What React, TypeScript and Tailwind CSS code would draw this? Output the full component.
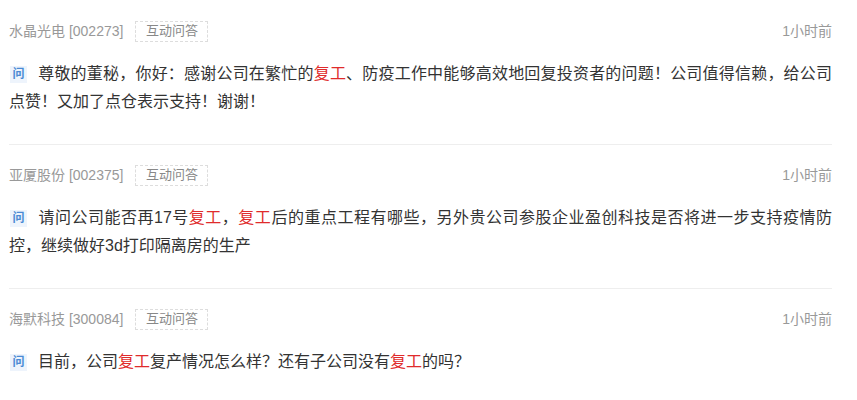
const items = [
  {
    name: "水晶光电",
    code: "002273",
    time: "1小时前",
    parts: [
      "尊敬的董秘，你好：感谢公司在繁忙的",
      { hl: "复工" },
      "、防疫工作中能够高效地回复投资者的问题！公司值得信赖，给公司点赞！又加了点仓表示支持！谢谢！",
    ],
  },
  {
    name: "亚厦股份",
    code: "002375",
    time: "1小时前",
    parts: [
      "请问公司能否再17号",
      { hl: "复工" },
      "，",
      { hl: "复工" },
      "后的重点工程有哪些，另外贵公司参股企业盈创科技是否将进一步支持疫情防控，继续做好3d打印隔离房的生产",
    ],
  },
  {
    name: "海默科技",
    code: "300084",
    time: "1小时前",
    parts: ["目前，公司", { hl: "复工" }, "复产情况怎么样？还有子公司没有", { hl: "复工" }, "的吗？"],
  },
];

type Part = string | { hl: string };

export default function App() {
  return (
    <div
      className="w-[857px] h-[400px] overflow-hidden bg-white pl-[9px] pr-[25px] pt-[1px]"
      style={{ fontFamily: '"Liberation Sans", "Noto Sans CJK SC", sans-serif' }}
    >
      {items.map((it, i) => (
        <div key={it.code} className={"pt-[19px] pb-[28px] " + (i < items.length - 1 ? "border-b border-[#eeeeee]" : "")}>
          <div className="flex items-center justify-between h-[22px]">
            <div className="flex items-center">
              <span className="text-[14px] text-[#999999]">
                {it.name} [{it.code}]
              </span>
              <span className="ml-[12px] h-[21px] w-[73px] flex items-center justify-center border border-dashed border-[#dddddd] text-[13px] text-[#888888]">
                互动问答
              </span>
            </div>
            <span className="text-[14px] text-[#999999]">{it.time}</span>
          </div>
          <p className="mt-[18px] text-[16px] leading-[28px] text-[#333333] text-justify">
            <span className="inline-block w-[17px] h-[17px] mr-[11px] ml-[1px] bg-[#eef4fc] text-[12px] leading-[17px] text-center font-bold text-[#4a8ad4] align-[1px]">
              问
            </span>
            {(it.parts as Part[]).map((p, j) =>
              typeof p === "string" ? (
                <span key={j}>{p}</span>
              ) : (
                <span key={j} className="text-[#e02b2b]">
                  {p.hl}
                </span>
              )
            )}
          </p>
        </div>
      ))}
    </div>
  );
}
